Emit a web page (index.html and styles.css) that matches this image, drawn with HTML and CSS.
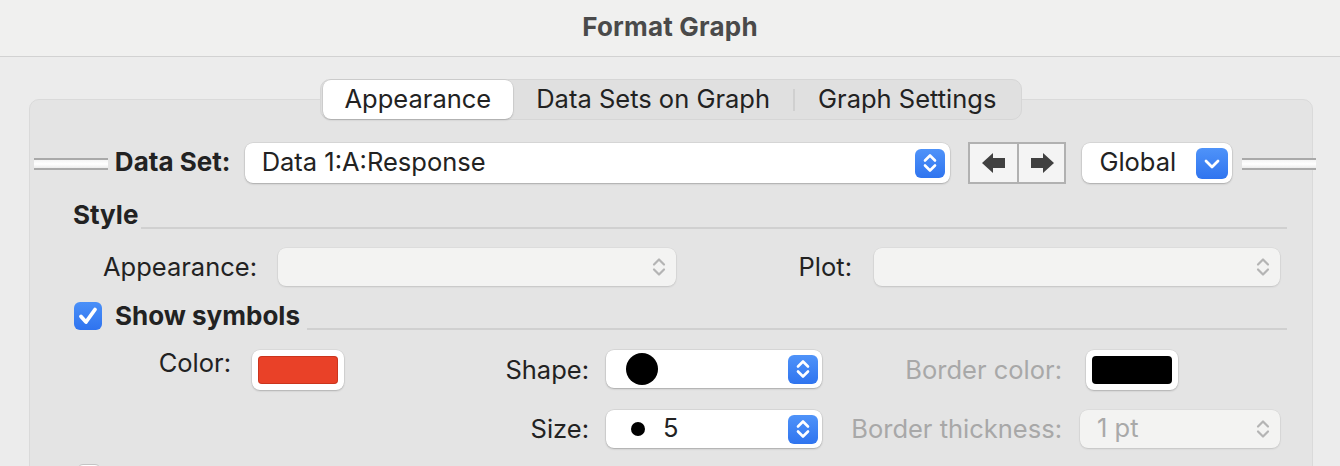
FILE: index.html
```html
<!DOCTYPE html>
<html lang="en">
<head>
<meta charset="utf-8">
<title>Format Graph</title>
<link rel="stylesheet" href="styles.css">
</head>
<body>
<div class="window">
  <div class="titlebar">Format Graph</div>
  <div class="content">
    <div class="tabs">
      <div class="tab selected">Appearance</div>
      <div class="tab">Data Sets on Graph</div>
      <div class="tab-sep"></div>
      <div class="tab">Graph Settings</div>
    </div>
    <div class="panel">
      <div class="ds-row">
        <div class="dline"></div>
        <div class="ds-label">Data Set:</div>
        <div class="popup ds-popup">
          <span class="popup-text">Data 1:A:Response</span>
          <span class="blue-btn">
            <svg width="30" height="28" viewBox="0 0 30 28"><path d="M10 11.5 L15 6.5 L20 11.5 M10 16.5 L15 21.5 L20 16.5" fill="none" stroke="#fff" stroke-width="2.6" stroke-linecap="round" stroke-linejoin="round"/></svg>
          </span>
        </div>
        <div class="arrows">
          <div class="arrow-btn">
            <svg width="24" height="20" viewBox="0 0 24 20"><path d="M0 10 L11 0 L11 5 L23 5 L23 15 L11 15 L11 20 Z" fill="#404040"/></svg>
          </div>
          <div class="arrow-btn">
            <svg width="24" height="20" viewBox="0 0 24 20"><path d="M24 10 L13 0 L13 5 L1 5 L1 15 L13 15 L13 20 Z" fill="#404040"/></svg>
          </div>
        </div>
        <div class="popup global-popup">
          <span class="popup-text">Global</span>
          <span class="blue-btn wide">
            <svg width="32" height="31" viewBox="0 0 32 31"><path d="M10 13 L16 19 L22 13" fill="none" stroke="#fff" stroke-width="2.8" stroke-linecap="round" stroke-linejoin="round"/></svg>
          </span>
        </div>
        <div class="dline right"></div>
      </div>

      <div class="section">
        <span class="section-title">Style</span>
        <span class="rule"></span>
      </div>

      <div class="style-grid">
        <div class="lbl lbl-a">Appearance:</div>
        <div class="popup disabled">
          <span class="popup-text"></span>
          <svg class="gray-step" width="20" height="28" viewBox="0 0 20 28"><path d="M5 11.5 L10 6.5 L15 11.5 M5 16.5 L10 21.5 L15 16.5" fill="none" stroke="#b4b4b4" stroke-width="2.2" stroke-linecap="round" stroke-linejoin="round"/></svg>
        </div>
        <div class="lbl lbl-b">Plot:</div>
        <div class="popup disabled">
          <span class="popup-text"></span>
          <svg class="gray-step" width="20" height="28" viewBox="0 0 20 28"><path d="M5 11.5 L10 6.5 L15 11.5 M5 16.5 L10 21.5 L15 16.5" fill="none" stroke="#b4b4b4" stroke-width="2.2" stroke-linecap="round" stroke-linejoin="round"/></svg>
        </div>
      </div>

      <div class="section check-section">
        <span class="checkbox checked">
          <svg width="28" height="28" viewBox="0 0 28 28"><path d="M7 14.5 L12 20 L21 7.5" fill="none" stroke="#fff" stroke-width="3.8" stroke-linecap="round" stroke-linejoin="round"/></svg>
        </span>
        <span class="section-title">Show symbols</span>
        <span class="rule"></span>
      </div>

      <div class="sym-grid">
        <div class="lbl lbl-c top">Color:</div>
        <div class="well"><span class="swatch red"></span></div>
        <div class="lbl lbl-d">Shape:</div>
        <div class="popup shape-popup">
          <span class="big-dot"></span>
          <span class="popup-text"></span>
          <span class="blue-btn">
            <svg width="30" height="28" viewBox="0 0 30 28"><path d="M10 11.5 L15 6.5 L20 11.5 M10 16.5 L15 21.5 L20 16.5" fill="none" stroke="#fff" stroke-width="2.6" stroke-linecap="round" stroke-linejoin="round"/></svg>
          </span>
        </div>
        <div class="lbl lbl-e dim">Border color:</div>
        <div class="well-cell"><div class="well"><span class="swatch black"></span></div></div>

        <div></div>
        <div></div>
        <div class="lbl lbl-d">Size:</div>
        <div class="popup size-popup">
          <span class="small-dot"></span>
          <span class="popup-text">5</span>
          <span class="blue-btn">
            <svg width="30" height="28" viewBox="0 0 30 28"><path d="M10 11.5 L15 6.5 L20 11.5 M10 16.5 L15 21.5 L20 16.5" fill="none" stroke="#fff" stroke-width="2.6" stroke-linecap="round" stroke-linejoin="round"/></svg>
          </span>
        </div>
        <div class="lbl lbl-e dim">Border thickness:</div>
        <div class="popup disabled thick-popup">
          <span class="popup-text">1 pt</span>
          <svg class="gray-step" width="20" height="28" viewBox="0 0 20 28"><path d="M5 11.5 L10 6.5 L15 11.5 M5 16.5 L10 21.5 L15 16.5" fill="none" stroke="#b4b4b4" stroke-width="2.2" stroke-linecap="round" stroke-linejoin="round"/></svg>
        </div>
      </div>

      <div class="next-row">
        <span class="checkbox empty"></span>
      </div>
    </div>
  </div>
</div>
</body>
</html>
```
FILE: styles.css
```css
* { box-sizing: border-box; }
html, body {
  margin: 0;
  padding: 0;
  width: 1340px;
  height: 466px;
  overflow: hidden;
  background: #ececec;
  font-family: Inter, "Noto Sans", "Liberation Sans", sans-serif;
  color: #222;
}
.window { width: 1340px; height: 466px; overflow: hidden; }

.titlebar {
  height: 57px;
  background: #f0f0ef;
  border-bottom: 1px solid #d2d2d2;
  display: flex;
  align-items: center;
  justify-content: center;
  font-size: 26px;
  font-weight: 700;
  letter-spacing: 0.2px;
  color: #4a4a4a;
  padding-bottom: 3px;
}

.content { padding: 22px 27px 0 29px; }

/* Tabs */
.tabs {
  position: relative;
  z-index: 2;
  width: fit-content;
  margin: 0 auto -21px;
  display: flex;
  align-items: center;
  height: 41px;
  padding: 0 2px;
  background: #e0e0e0;
  border: 1px solid #d6d6d6;
  border-radius: 10px;
  font-size: 25.5px;
}
.tab {
  height: 39px;
  display: flex;
  align-items: center;
  padding: 0 23px 2px;
  color: #222;
}
.tab.selected {
  background: #fff;
  border-radius: 8px;
  box-shadow: 0 1px 2px rgba(0,0,0,0.18), 0 0 0 0.5px rgba(0,0,0,0.08);
  padding: 0 22px 2px;
}
.tab-sep { width: 2px; height: 22px; background: #d0d0d0; }

/* Panel */
.panel {
  position: relative;
  z-index: 1;
  background: #e4e4e4;
  border: 1px solid #dadada;
  border-radius: 10px;
  height: 400px;
  padding-top: 43px;
}

.ds-row {
  display: flex;
  align-items: center;
  height: 40px;
  margin-left: 4px;
  margin-right: -4px;
  font-size: 25.5px;
}
.dline {
  width: 74px;
  height: 12px;
  border-top: 2px solid #a9a9a9;
  border-bottom: 2px solid #a9a9a9;
  background: linear-gradient(#f4f4f4, #ffffff 50%, #ececec);
  margin-top: 1px;
}
.dline.right { margin-left: 10px; }
.ds-label { font-weight: 700; font-size: 26px; margin-left: 7px; width: 130px; padding-bottom: 3px; }

.popup {
  height: 40px;
  background: #fff;
  border-radius: 8px;
  box-shadow: 0 1px 2px rgba(0,0,0,0.22), 0 0 0 0.5px rgba(0,0,0,0.10);
  display: flex;
  align-items: center;
  padding: 0 5px 0 17px;
  font-size: 25.5px;
}
.popup-text { flex: 1; white-space: nowrap; padding-bottom: 3px; }
.ds-popup { width: 707px; }
.global-popup { width: 150px; margin-left: 16px; padding-right: 4px; }

.blue-btn {
  width: 30px;
  height: 29px;
  border-radius: 6px;
  background: linear-gradient(#4f93f9, #2f74ef);
  display: flex;
  align-items: center;
  justify-content: center;
}
.blue-btn.wide { width: 32px; height: 31px; }
.blue-btn svg { display: block; }

.arrows {
  display: flex;
  margin-left: 18px;
  height: 42px;
  border: 2px solid #b1b1b1;
  background: #f4f4f4;
}
.arrow-btn {
  width: 47px;
  display: flex;
  align-items: center;
  justify-content: center;
}
.arrow-btn + .arrow-btn { border-left: 2px solid #b1b1b1; }

/* Sections */
.section {
  display: flex;
  align-items: flex-end;
  height: 30px;
  margin: 17px 25px 0 43px;
}
.section-title { font-size: 26px; font-weight: 700; line-height: 30px; color: #222; }
.rule {
  flex: 1;
  height: 2px;
  background: #d0d0d0;
  margin: 0 0 1px 3px;
}

.style-grid {
  display: grid;
  grid-template-columns: 248px 398px 198px 406px;
  grid-template-rows: 38px;
  margin-top: 18px;
}
.lbl { display: flex; align-items: center; justify-content: flex-end; white-space: nowrap; font-size: 25.5px; padding-bottom: 2px; }
.lbl-a { padding-right: 21px; }
.lbl-b { padding-right: 22px; }
.popup.disabled { background: #f3f3f2; box-shadow: 0 1px 2px rgba(0,0,0,0.12), 0 0 0 0.5px rgba(0,0,0,0.06); color: #a9a9a9; height: 38px; }
.gray-step { display: block; margin-right: 2px; }

.check-section { margin: 16px 25px 0 44px; height: 28px; align-items: center; }
.check-section .section-title { margin-left: 13px; line-height: 28px; }
.check-section .rule { align-self: flex-end; margin-bottom: 0; margin-left: 7px; }
.checkbox {
  width: 28px;
  height: 28px;
  border-radius: 6px;
  display: flex;
  align-items: center;
  justify-content: center;
}
.checkbox.checked { background: linear-gradient(#4a90f8, #2f73ef); }
.checkbox.empty { background: #fff; border: 1px solid #c4c4c4; width: 24px; height: 24px; }

.sym-grid {
  display: grid;
  grid-template-columns: 222px 92px 262px 216px 258px 200px;
  grid-template-rows: 40px 38px;
  row-gap: 20px;
  margin-top: 20px;
}
.lbl-c { padding-right: 21px; }
.lbl-c.top { align-items: flex-start; padding-top: 0; line-height: 26px; }
.lbl-d { padding-right: 17px; }
.lbl-e { padding-right: 18px; }
.dim { color: #a8a8a8; }

.well {
  width: 92px;
  height: 40px;
  background: #fff;
  border-radius: 8px;
  box-shadow: 0 1px 2px rgba(0,0,0,0.2), 0 0 0 0.5px rgba(0,0,0,0.08);
  padding: 6px;
  display: flex;
}
.well-cell { padding-left: 6px; }
.swatch { flex: 1; border-radius: 4px; }
.swatch.red { background: #e94128; box-shadow: inset 0 0 0 1px rgba(150,30,10,0.35); }
.swatch.black { background: #000; }

.shape-popup { height: 38px; padding-left: 20px; padding-right: 4px; }
.size-popup { height: 38px; padding-left: 25px; padding-right: 4px; }
.big-dot { width: 32px; height: 32px; border-radius: 50%; background: #000; }
.small-dot { width: 14px; height: 14px; border-radius: 50%; background: #000; margin-right: 18px; }
.thick-popup { padding-left: 17px; }

.next-row { margin: 16px 0 0 47px; }
```
